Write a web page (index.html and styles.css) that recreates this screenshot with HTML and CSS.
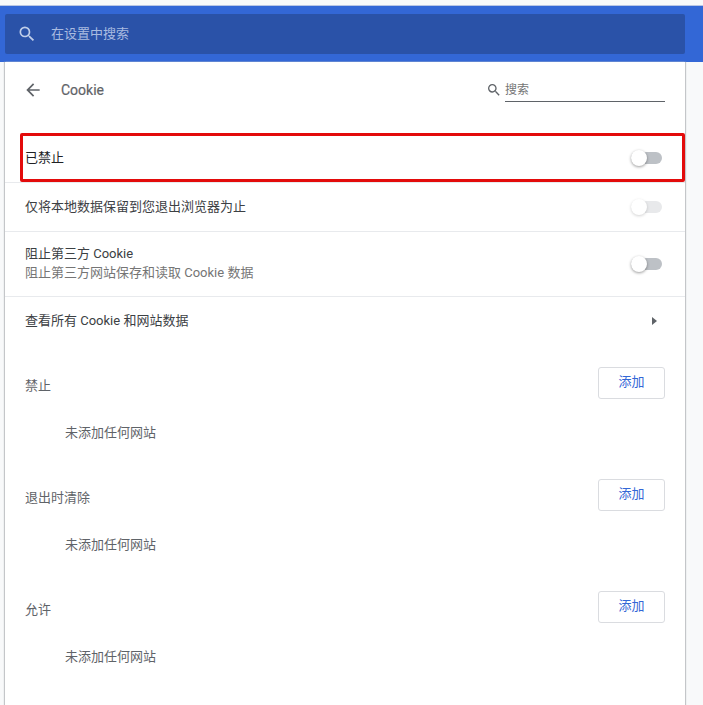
FILE: index.html
```html
<!DOCTYPE html>
<html lang="zh-CN">

<head>
    <meta charset="UTF-8">
    <title>Cookie</title>
    <link rel="stylesheet" href="styles.css">
</head>

<body>
    <header class="toolbar">
        <div class="toolbar-search">
            <svg class="toolbar-icon" viewBox="0 0 24 24" width="20" height="20"><path d="M15.5 14h-.79l-.28-.27A6.47 6.47 0 0 0 16 9.5 6.5 6.5 0 1 0 9.5 16c1.61 0 3.09-.59 4.23-1.57l.27.28v.79l5 4.99L20.49 19l-4.99-5zm-6 0C7.01 14 5 11.99 5 9.5S7.01 5 9.5 5 14 7.01 14 9.5 11.99 14 9.5 14z"/></svg>
            <span class="toolbar-text">在设置中搜索</span>
        </div>
    </header>

    <main class="card">
        <div class="subpage-head">
            <svg class="back-icon" viewBox="0 0 24 24" width="20" height="20"><path d="M20 11H7.83l5.59-5.59L12 4l-8 8 8 8 1.41-1.41L7.83 13H20v-2z"/></svg>
            <span class="subpage-title">Cookie</span>
            <div class="subpage-search">
                <svg class="small-search" viewBox="0 0 24 24" width="16" height="16"><path d="M15.5 14h-.79l-.28-.27A6.47 6.47 0 0 0 16 9.5 6.5 6.5 0 1 0 9.5 16c1.61 0 3.09-.59 4.23-1.57l.27.28v.79l5 4.99L20.49 19l-4.99-5zm-6 0C7.01 14 5 11.99 5 9.5S7.01 5 9.5 5 14 7.01 14 9.5 11.99 14 9.5 14z"/></svg>
                <span class="search-field">搜索</span>
            </div>
        </div>

        <div class="row row-first">
            <span class="row-label dark">已禁止</span>
            <span class="toggle"></span>
            <div class="highlight"></div>
        </div>
        <div class="row">
            <span class="row-label">仅将本地数据保留到您退出浏览器为止</span>
            <span class="toggle off"></span>
        </div>
        <div class="row row-tall">
            <div class="row-text">
                <div class="row-title">阻止第三方 Cookie</div>
                <div class="row-sub">阻止第三方网站保存和读取 Cookie 数据</div>
            </div>
            <span class="toggle"></span>
        </div>
        <div class="row">
            <span class="row-label">查看所有 Cookie 和网站数据</span>
            <span class="arrow"></span>
        </div>

        <section class="site-list">
            <div class="list-head">
                <span class="list-title">禁止</span>
                <button class="add-btn">添加</button>
            </div>
            <div class="list-empty">未添加任何网站</div>
        </section>
        <section class="site-list">
            <div class="list-head">
                <span class="list-title">退出时清除</span>
                <button class="add-btn">添加</button>
            </div>
            <div class="list-empty">未添加任何网站</div>
        </section>
        <section class="site-list">
            <div class="list-head">
                <span class="list-title">允许</span>
                <button class="add-btn">添加</button>
            </div>
            <div class="list-empty">未添加任何网站</div>
        </section>
    </main>
</body>

</html>
```

FILE: styles.css
```css
html,
body {
    height: 100%;
}

body {
    margin: 0;
    background: #f8f9fa;
    font-family: "Roboto", "Noto Sans CJK SC", sans-serif;
    font-size: 13px;
    color: #5f6368;
    overflow: hidden;
}

.toolbar {
    margin-top: 5px;
    height: 57px;
    box-sizing: border-box;
    padding: 8px 18px 8px 5px;
    background: #3367d6;
    border-top: 1px solid #b9c6e4;
}

.toolbar-search {
    height: 40px;
    display: flex;
    align-items: center;
    padding-left: 12px;
    gap: 14px;
    background: #2a52a8;
    border-radius: 2px;
    color: #a9bbe0;
}

.toolbar-text {
    padding-bottom: 3px;
}

.toolbar-icon {
    fill: #c0cee9;
}

.card {
    width: 680px;
    height: 643px;
    margin-left: 5px;
    background: #fff;
    box-shadow: -1px 0 1px #c4c6c9, 1px 0 1px #c4c6c9;
}

.subpage-head {
    height: 71px;
    box-sizing: border-box;
    display: flex;
    align-items: center;
    padding: 0 20px 16px 18px;
}

.back-icon {
    fill: #5f6368;
}

.subpage-title {
    margin-left: 18px;
    font-size: 14px;
    color: #5f6368;
    -webkit-text-stroke: 0.2px #5f6368;
}

.subpage-search {
    margin-left: auto;
    display: flex;
    align-items: center;
    gap: 3px;
}

.small-search {
    fill: #5f6368;
}

.search-field {
    width: 160px;
    height: 23px;
    line-height: 25px;
    border-bottom: 1px solid #5f6368;
    font-size: 12px;
    color: #757575;
}

.row {
    height: 49px;
    box-sizing: border-box;
    display: flex;
    align-items: center;
    justify-content: space-between;
    padding: 0 23px 0 20px;
    border-top: 1px solid #e8eaed;
    position: relative;
}

.row-first {
    border-top: none;
}

.row-tall {
    height: 65px;
}

.row-label {
    padding-bottom: 3px;
    color: #3c4043;
}

.row-label.dark {
    color: #202124;
}

.row-text {
    padding-bottom: 3px;
    line-height: 19px;
}

.row-title {
    color: #3c4043;
}

.row-sub {
    color: #757575;
}

.toggle {
    width: 31px;
    height: 12px;
    position: relative;
    background: #bdc1c6;
    border-radius: 6px;
}

.toggle::after {
    content: "";
    position: absolute;
    left: 0;
    top: -2px;
    width: 16px;
    height: 16px;
    border-radius: 50%;
    background: #fff;
    box-shadow: 0 1px 3px rgba(0, 0, 0, 0.4);
}

.toggle.off {
    background: #e8e9eb;
}

.toggle.off::after {
    box-shadow: 0 1px 3px rgba(0, 0, 0, 0.18);
}

.arrow {
    width: 0;
    height: 0;
    margin-right: 5px;
    border-left: 5px solid #5f6368;
    border-top: 4px solid transparent;
    border-bottom: 4px solid transparent;
}

.highlight {
    position: absolute;
    left: 15px;
    right: 0;
    top: 0;
    bottom: 0;
    border: 3px solid #e30b0b;
    border-radius: 2px;
}

.site-list {
    height: 112px;
    padding: 0 20px;
}

.list-head {
    height: 32px;
    padding-top: 22px;
    display: flex;
    justify-content: space-between;
    align-items: flex-end;
}

.list-title {
    color: #5f6368;
    line-height: 20px;
    margin-bottom: 3px;
}

.add-btn {
    width: 67px;
    height: 32px;
    padding: 0 0 5px;
    background: #fff;
    border: 1px solid #dadce0;
    border-radius: 3px;
    font: inherit;
    color: #3367d6;
}

.list-empty {
    margin-top: 24px;
    padding-left: 40px;
    line-height: 20px;
    color: #5f6368;
}
```
